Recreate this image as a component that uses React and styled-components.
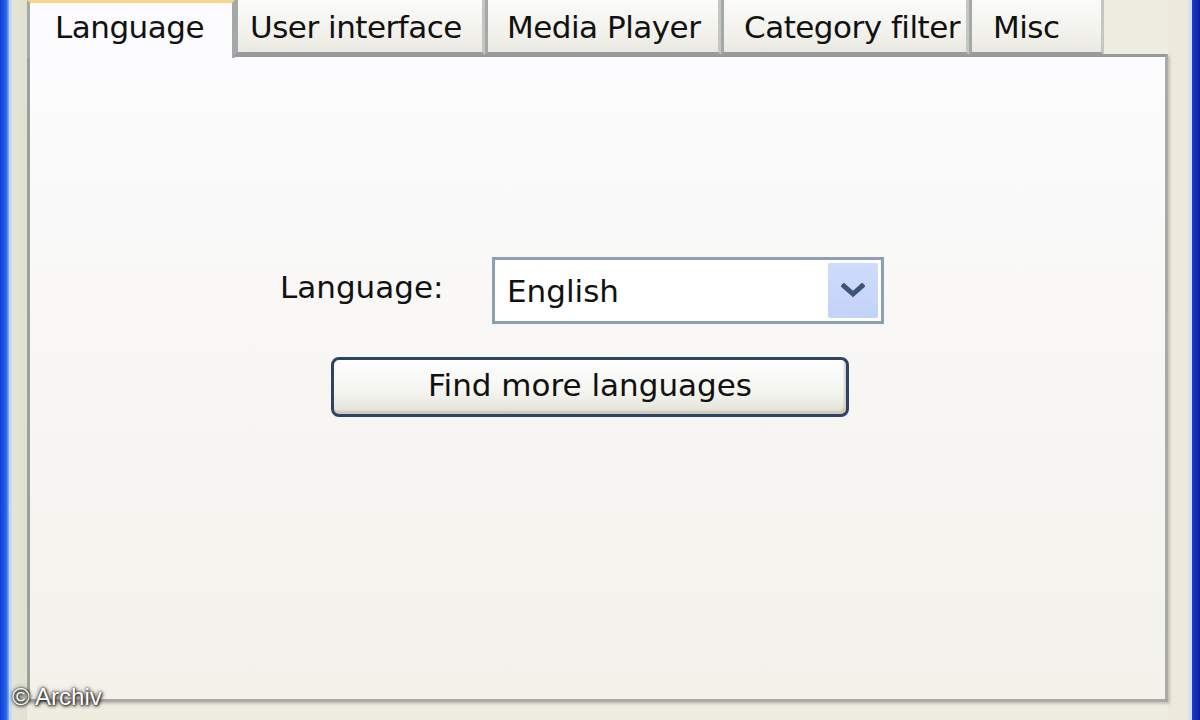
import React from 'react';
import styled, { createGlobalStyle } from 'styled-components';

const GlobalStyle = createGlobalStyle`
    html, body {
        margin: 0;
        padding: 0;
        width: 1200px;
        height: 720px;
        overflow: hidden;
        background: #ece9d8;
    }
    #root {
        height: 100%;
    }
`;

const Window = styled.div`
    position: relative;
    display: flex;
    width: 1200px;
    height: 720px;
    font-family: 'DejaVu Sans', Tahoma, sans-serif;
    color: #111;
`;

const Frame = styled.div`
    width: ${(p) => p.width}px;
    flex: none;
    background: ${(p) => p.bg};
`;

const Body = styled.div`
    flex: 1;
    display: flex;
    flex-direction: column;
    background: #efede2;
`;

const TabStrip = styled.div`
    display: flex;
    height: 55px;
    flex: none;
    position: relative;
    z-index: 2;
`;

const Tab = styled.div`
    box-sizing: border-box;
    width: ${(p) => p.width}px;
    height: ${(p) => (p.active ? 58 : 55)}px;
    padding-left: ${(p) => p.pad}px;
    padding-top: ${(p) => (p.active ? 6 : 9)}px;
    font-size: 31px;
    letter-spacing: -0.5px;
    white-space: nowrap;
    overflow: hidden;
    border-left: 3px solid #a3a9a8;
    border-right: 3px solid ${(p) => (p.active ? '#a3a9a8' : '#c4c6c0')};
    border-bottom: ${(p) => (p.active ? 'none' : '3px solid #979c9a')};
    border-top: ${(p) => (p.active ? '3px solid #f6d68a' : 'none')};
    background: ${(p) =>
        p.active ? '#fcfcfe' : 'linear-gradient(#fbfbf9, #f1f0ea 70%, #e8e7e0)'};
`;

const TabFill = styled.div`
    flex: 1;
`;

const Panel = styled.div`
    flex: 1;
    position: relative;
    z-index: 1;
    margin-top: -1px;
    border: 3px solid #9aa0a0;
    border-top-color: #979c9a;
    border-right-color: #a9aba6;
    border-bottom-color: #a9aaa6;
    box-shadow: 2px 2px 2px rgba(120, 120, 110, 0.35);
    background: linear-gradient(#fcfcfe, #f7f6f3 55%, #f3f1ea);
    display: flex;
    flex-direction: column;
    padding-top: 200px;
`;

const Row = styled.div`
    display: flex;
    align-items: center;
    margin-left: 250px;
`;

const Label = styled.span`
    font-size: 31px;
    width: 212px;
    padding-bottom: 8px;
`;

const Combo = styled.div`
    box-sizing: border-box;
    width: 392px;
    height: 67px;
    border: 3px solid #8e9fb5;
    background: #fff;
    display: flex;
    align-items: center;
    justify-content: space-between;
    padding: 3px 3px 3px 12px;
`;

const ComboText = styled.span`
    font-size: 31px;
`;

const DropButton = styled.div`
    width: 50px;
    height: 55px;
    background: linear-gradient(#cfdcfb, #c2d2f8);
    border-radius: 2px;
    display: flex;
    align-items: center;
    justify-content: center;
`;

const Button = styled.div`
    box-sizing: border-box;
    width: 518px;
    height: 60px;
    margin-top: 33px;
    margin-left: 301px;
    border: 3px solid #2c4565;
    border-radius: 8px;
    background: linear-gradient(#fefefe, #f4f4f0 60%, #e2e0d6);
    box-shadow: inset -2px -3px 2px rgba(190, 185, 165, 0.6);
    display: flex;
    align-items: center;
    justify-content: center;
    font-size: 31px;
    padding-bottom: 4px;
`;

const BottomStrip = styled.div`
    height: 18px;
    flex: none;
`;

const Watermark = styled.div`
    position: absolute;
    left: 12px;
    top: 683px;
    font-family: 'Liberation Sans', Arial, sans-serif;
    font-size: 24px;
    color: #fff;
    text-shadow: 0 0 2px #222, 1px 1px 3px #111, 0 0 5px #444;
    z-index: 5;
`;

const tabs = [
    { label: 'Language', width: 208, pad: 25, active: true },
    { label: 'User interface', width: 250, pad: 12 },
    { label: 'Media Player', width: 236, pad: 19 },
    { label: 'Category filter', width: 248, pad: 20 },
    { label: 'Misc', width: 135, pad: 21 },
];

function Chevron() {
    return (
        <svg width="24" height="16" viewBox="0 0 24 16">
            <path d="M3 3 L12 11 L21 3" fill="none" stroke="#3f5378" strokeWidth="5" strokeLinecap="square" />
        </svg>
    );
}

export default function App() {
    return (
        <Window>
            <GlobalStyle />
            <Frame width={9} bg="linear-gradient(90deg, #0b3fd6, #2a63ea 70%, #8fb2f5)" />
            <Frame width={3} bg="#c9d9f4" />
            <Frame width={15} bg="linear-gradient(90deg, #e6e4d6, #dfe2d0)" />
            <Body>
                <TabStrip>
                    {tabs.map((t) => (
                        <Tab key={t.label} width={t.width} pad={t.pad} active={t.active}>
                            {t.label}
                        </Tab>
                    ))}
                    <TabFill />
                </TabStrip>
                <Panel>
                    <Row>
                        <Label>Language:</Label>
                        <Combo>
                            <ComboText>English</ComboText>
                            <DropButton>
                                <Chevron />
                            </DropButton>
                        </Combo>
                    </Row>
                    <Button>Find more languages</Button>
                </Panel>
                <BottomStrip />
            </Body>
            <Frame width={20} bg="#eeeadb" />
            <Frame width={4} bg="#d6e2f6" />
            <Frame width={8} bg="linear-gradient(90deg, #1c3fc8, #0a1f9a)" />
            <Watermark>© Archiv</Watermark>
        </Window>
    );
}
